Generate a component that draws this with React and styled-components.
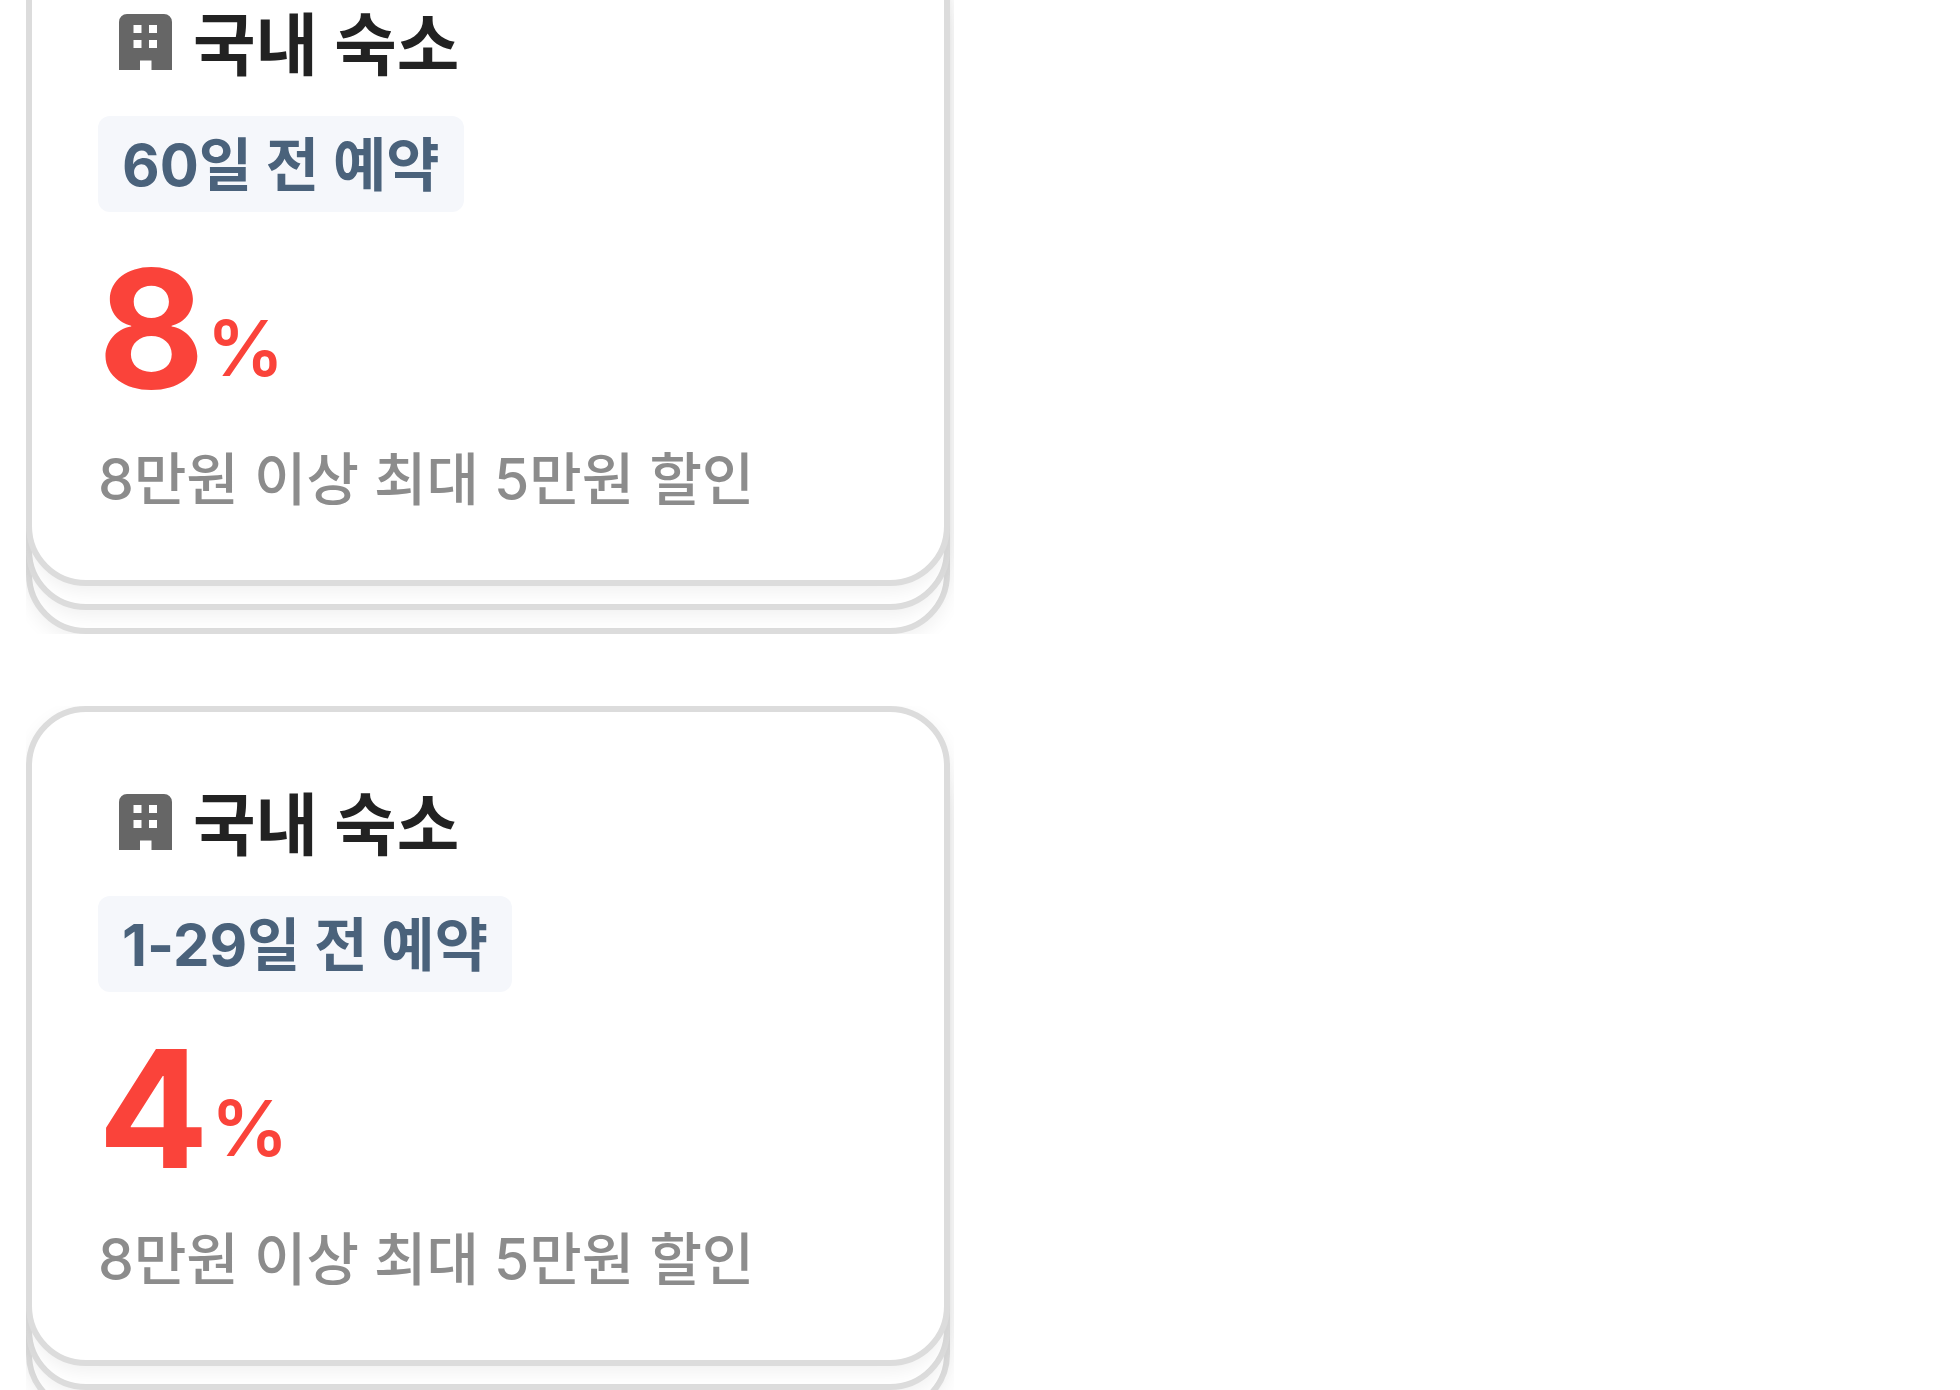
import React from "react";
import styled, {createGlobalStyle} from "styled-components";

const GlobalStyle = createGlobalStyle`
  * {
    box-sizing: border-box;
  }

  body {
    margin: 0;
    background: #fff;
    color: #222;
    font-family: Inter, "Noto Sans CJK KR", sans-serif;
    font-optical-sizing: none;
  }
`;

const Page = styled.main`
  height: 100vh;
  overflow: hidden;
  padding: 0 26px;
`;

const CouponList = styled.ul`
  display: flex;
  flex-direction: column;
  gap: 72px;
  max-width: 928px;
  margin: -74px 0 0;
  padding: 0;
  list-style: none;
`;

const Stack = styled.li`
  display: grid;
  padding-right: 4px;
  overflow: hidden;
`;

// All sheets share one grid cell, each one shifted down by its depth.
const Sheet = styled.div`
  grid-area: 1 / 1;
  margin-top: ${({$depth}) => $depth * 24}px;
  margin-bottom: ${({$depth}) => (2 - $depth) * 24}px;
  border: 6px solid #dcdcdc;
  border-radius: 60px;
  background: #fff;
  box-shadow: 0 6px 18px rgba(0, 0, 0, 0.06);
`;

const Card = styled(Sheet)`
  display: flex;
  flex-direction: column;
  align-items: flex-start;
  padding: 66px;
`;

const Title = styled.h2`
  display: flex;
  align-items: center;
  gap: 21px;
  margin: 0 0 24px;
  padding-left: 21px;
  font-size: 68px;
  font-weight: 700;
  line-height: 94px;
`;

const Chip = styled.span`
  padding: 2px 24px 0;
  border-radius: 12px;
  background: #f5f7fb;
  color: #4a627b;
  font-size: 58px;
  font-weight: 700;
  line-height: 94px;
`;

const Discount = styled.p`
  display: flex;
  align-items: flex-end;
  gap: 2px;
  margin: 33px 0;
  color: #fa433a;
`;

const Amount = styled.strong`
  font-size: 164px;
  font-weight: 700;
  line-height: 168px;
`;

const Unit = styled.span`
  font-size: 77px;
  font-weight: 600;
  line-height: 130px;
`;

const Condition = styled.p`
  margin: 0;
  color: #8c8c8c;
  font-size: 57px;
  font-weight: 500;
  line-height: 68px;
`;

const Icon = styled.svg`
  flex: none;
  margin-bottom: 6px;
`;

const BuildingIcon = () => (
  <Icon width="53" height="56" viewBox="0 0 53 56" aria-hidden="true">
    <path
      fill="#666"
      fillRule="evenodd"
      d="M8 0h37a8 8 0 0 1 8 8v48H32.500V46.500H21V56H0V8a8 8 0 0 1 8-8zM14.500 11v8h8v-8zM30 11v8h8v-8zM14.500 26v8h8v-8zM30 26v8h8v-8z"
    />
  </Icon>
);

const coupons = [
  {id: "60", title: "국내 숙소", period: "60일 전 예약", rate: 8, condition: "8만원 이상 최대 5만원 할인"},
  {id: "1-29", title: "국내 숙소", period: "1-29일 전 예약", rate: 4, condition: "8만원 이상 최대 5만원 할인"},
];

const Coupon = ({title, period, rate, condition}) => (
  <Stack>
    <Sheet $depth={2} />
    <Sheet $depth={1} />
    <Card $depth={0}>
      <Title>
        <BuildingIcon />
        {title}
      </Title>
      <Chip>{period}</Chip>
      <Discount>
        <Amount>{rate}</Amount>
        <Unit>%</Unit>
      </Discount>
      <Condition>{condition}</Condition>
    </Card>
  </Stack>
);

const App = () => (
  <>
    <GlobalStyle />
    <Page>
      <CouponList>
        {coupons.map(({id, ...coupon}) => (
          <Coupon key={id} {...coupon} />
        ))}
      </CouponList>
    </Page>
  </>
);

export default App;
